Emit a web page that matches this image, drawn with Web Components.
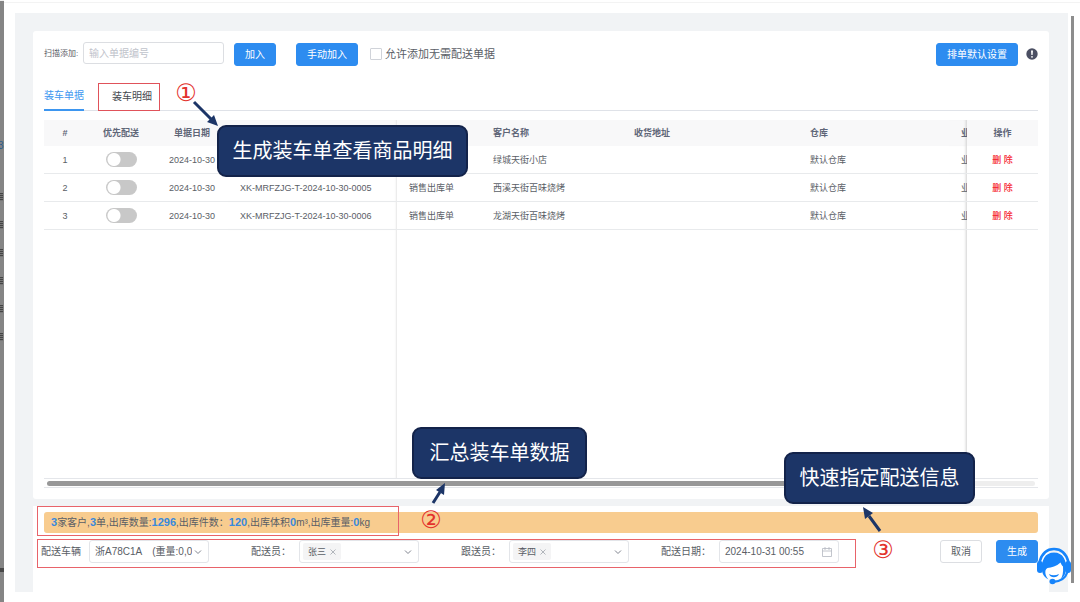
<!DOCTYPE html>
<html lang="zh-CN">
<head>
<meta charset="utf-8">
<title>装车单</title>
<style>
html,body{margin:0;height:100%}
body{font:10px/14px "Liberation Sans","Noto Sans CJK SC",sans-serif;color:#5a5e66;background:#fff;overflow:hidden}
</style>
</head>
<body>
<load-app></load-app>
<script>
const define=(name,html,init)=>customElements.define(name,class extends HTMLElement{
  connectedCallback(){
    if(this.shadowRoot)return;
    const root=this.attachShadow({mode:'open'});
    root.innerHTML='<style>*{box-sizing:border-box}button,input,select{font:inherit;color:inherit;margin:0}</style>'+(typeof html==='function'?html(this):html);
    if(init)init(root,this);
  }
});

define('ui-button',el=>`<style>
:host{display:block}
button{display:block;width:100%;height:23px;padding:0 10px;border:1px solid #2d8cf0;border-radius:3px;background:#2d8cf0;color:#fff;white-space:nowrap;line-height:20px}
:host([plain]) button{background:#fff;border-color:#dcdee2;color:#5a5e66}
</style><button type="button"><slot></slot></button>`);

/* page behind the drawer: only its edge is visible */
define('page-edge',`<style>
:host{display:flex;flex-direction:column;width:4px;background:#858585;overflow:hidden;border-top:1px solid #eee}
b{color:#2b5f8e;font-weight:400;line-height:14px;margin-top:138px;flex:none;margin-left:-2px}
i{flex:none;height:8px;width:3px;margin-top:20px;background:repeating-linear-gradient(#444 0 1px,#777 1px 2px)}
i:first-of-type{margin-top:40px}
u{flex:none;height:4px;background:#484848;margin-top:227px}
</style><b>3</b><i></i><i></i><i></i><i></i><i></i><i></i><u></u>`);

define('scan-toolbar',`<style>
:host{display:flex;align-items:center;height:24px}
label.s{font-size:8px;width:39px;white-space:nowrap}
input[type=text]{align-self:flex-start;width:141px;height:22px;border:1px solid #dcdee2;border-radius:3px;padding:0 5px;outline:0;background:#fff}
input::placeholder{color:#bfc3cb;opacity:1}
ui-button{align-self:flex-end;width:42px;margin-left:10px}
ui-button.m{width:62px;margin-left:20px}
ui-button.d{width:82px;margin-left:auto}
.c{display:flex;align-items:center;gap:3px;margin-left:12px;font-size:11px;white-space:nowrap}
.c input{appearance:none;width:12px;height:12px;border:1px solid #d0d3d9;border-radius:1px;background:#fff}
svg{width:12px;height:12px;margin-left:8px}
</style>
<label class="s" for="scan">扫描添加:</label><input type="text" id="scan" placeholder="输入单据编号">
<ui-button>加入</ui-button><ui-button class="m">手动加入</ui-button>
<label class="c"><input type="checkbox">允许添加无需配送单据</label>
<ui-button class="d">排单默认设置</ui-button>
<svg viewBox="0 0 12 12"><circle cx="6" cy="6" r="5.7" fill="#4b4f63"/><path d="M5 2.5h2l-.4 4.4H5.4z" fill="#fff"/><circle cx="6" cy="8.8" r=".9" fill="#fff"/></svg>`);

define('doc-tabs',`<style>
:host{display:flex;gap:28px;height:28px;border-bottom:1px solid #dfe2e8}
button{position:relative;border:0;background:none;padding:0 0 1px;height:28px;color:#44484f}
button.on{color:#3d96f0;border-bottom:2px solid #3d96f0;padding:0}
.mark{position:absolute;inset:0 -8px 0 -14px;border:1px solid #e0525a}
</style><button type="button" class="on">装车单据</button><button type="button">装车明细<span class="mark"></span></button>`);

const rows=[['','','绿城天街小店'],['XK-MRFZJG-T-2024-10-30-0005','销售出库单','西溪天街百味烧烤'],['XK-MRFZJG-T-2024-10-30-0006','销售出库单','龙湖天街百味烧烤']];
define('doc-table',`<style>
:host{display:flex;flex-direction:column;min-height:0}
.w{flex:1;min-height:0;border-bottom:1px solid #e4e6ea}
table{width:100%;height:100%;table-layout:fixed;border-collapse:separate;border-spacing:0;font-size:9px;line-height:12px}
th,td{padding:0 0 0 12px;text-align:left;white-space:nowrap;overflow:hidden;border-bottom:1px solid #e8eaec}
th{height:26px;background:#f8f8f9;border:0;font-weight:700;color:#5f6678}
td{height:28px}
tr.z td{height:auto;border:0}
.n{text-align:center;padding:0}
.e{box-shadow:inset -2px 0 2px -1px #e6e6e6}
.b{box-shadow:inset -3px 0 3px -2px #d0d0d0}
.n input{appearance:none;display:block;margin:0 auto;width:31px;height:15px;border-radius:8px;background:radial-gradient(circle at 8px 50%,#fff 6px,#c8c8c8 7px)}
a{color:#f5222d;text-decoration:none;font-weight:500}
.t{height:9px;padding:2px 3px;border-bottom:1px solid #e4e6ea}
.t div{height:5px;border-radius:3px;background:linear-gradient(90deg,#989898 86%,#eee 86%)}
</style>
<div class="w"><table><colgroup><col style="width:42px"><col style="width:70px"><col style="width:72px"><col style="width:169px"><col style="width:84px"><col style="width:141px"><col><col style="width:151px"><col style="width:18px"><col style="width:71px"></colgroup>
<thead><tr><th class="n">#</th><th class="n">优先配送</th><th class="n">单据日期</th><th class="e"></th><th></th><th>客户名称</th><th>收货地址</th><th>仓库</th><th class="b">业</th><th class="n">操作</th></tr></thead>
<tbody>${rows.map((r,i)=>`<tr><td class="n">${i+1}</td><td class="n"><input type="checkbox" role="switch" aria-label="优先配送"></td><td class="n">2024-10-30</td><td class="e">${r[0]}</td><td>${r[1]}</td><td>${r[2]}</td><td></td><td>默认仓库</td><td class="b">业</td><td class="n"><a href="#">删 除</a></td></tr>`).join('')}
<tr class="z"><td></td><td></td><td></td><td class="e"></td><td></td><td></td><td></td><td></td><td class="b"></td><td></td></tr></tbody></table></div>
<div class="t"><div></div></div>`);

define('summary-bar',`<style>
:host{display:flex;align-items:center;height:21px;padding:0 7px;border-radius:3px;background:#f8cc8f;white-space:nowrap}
b{font-size:11px;color:#3989dc}
</style><span><b>3</b>家客户,<b>3</b>单,出库数量:<b>1296</b>,出库件数：<b>120</b>,出库体积<b>0</b>m³,出库重量:<b>0</b>kg</span>`);

const chevron='<svg class="v" viewBox="0 0 8 8"><path d="M1 2.5l3 3 3-3" fill="none" stroke="#80848f"/></svg>';
define('form-field',el=>{
  const kind=el.getAttribute('kind'),v=el.getAttribute('value');
  const control={
    select:`<select id="f"><option>${v}</option></select>${chevron}`,
    tags:`<span class="tag">${v}<button type="button" aria-label="移除"><svg viewBox="0 0 6 6"><path d="M.5.5l5 5m0-5l-5 5" stroke="#a0a4ac" stroke-width=".8"/></svg></button></span><input id="f" type="text" role="combobox" aria-expanded="false">${chevron}`,
    date:`<input id="f" type="text" value="${v}"><svg class="cal" viewBox="0 0 10 10"><path d="M.5 1.5h9v8h-9zM.5 4h9M3 0v3M7 0v3" fill="none" stroke="#b4b8c0" stroke-width=".8"/></svg>`
  }[kind];
  return `<style>
:host{display:flex;align-items:center;gap:8px}
label{width:50px;text-align:right;white-space:nowrap}
:host([kind=select]) label{width:40px}
.box{display:flex;align-items:center;width:120px;height:23px;border:1px solid #e3e5e9;border-radius:3px;padding:0 6px 0 3px;background:#fff}
input,select{appearance:none;flex:1;min-width:0;border:0;background:none;outline:0;padding:0 0 0 2px;height:20px}
.v{width:8px;height:8px;flex:none;margin-left:2px}
.cal{width:10px;height:10px;flex:none}
.tag{display:flex;align-items:center;gap:4px;height:17px;padding:0 5px;background:#f4f4f5;font-size:9px;border-radius:2px}
.tag button{border:0;background:none;padding:0;width:6px;height:6px;display:flex}
.tag svg{width:6px;height:6px}
</style><label for="f">${el.getAttribute('label')}</label><div class="box">${control}</div>`;
});

define('delivery-footer',`<style>
:host{display:flex;flex-direction:column;gap:7px;padding:6px 11px 29px 8px;background:#fff;position:relative}
summary-bar{margin-left:3px}
.r{display:flex;gap:32px;align-items:center}
.a{display:flex;gap:14px;margin-left:auto}
.a ui-button{width:42px}
.m{position:absolute;border:1px solid #e8636a}
.m1{left:4px;top:0;width:362px;height:30px}
.m2{left:4px;top:33px;width:819px;height:29px}
</style>
<summary-bar></summary-bar>
<div class="r"><form-field kind="select" label="配送车辆" value="浙A78C1A&emsp;(重量:0,0)"></form-field><form-field kind="tags" label="配送员：" value="张三"></form-field><form-field kind="tags" label="跟送员：" value="李四"></form-field><form-field kind="date" label="配送日期：" value="2024-10-31 00:55"></form-field>
<div class="a"><ui-button plain>取消</ui-button><ui-button>生成</ui-button></div></div>
<span class="m m1"></span><span class="m m2"></span>`);

define('call-out',`<style>
:host{position:absolute;display:flex;align-items:center;justify-content:center;height:52px;border:2px solid #13234a;border-radius:9px;background:#1c3567;color:#fff;font-size:20px;line-height:28px;white-space:nowrap}
</style><slot></slot>`);

define('note-layer',`<style>
:host{position:absolute;inset:0;pointer-events:none}
svg{position:absolute;left:0;top:0;width:1080px;height:602px}
span{position:absolute;color:#e3322d;font:24px/24px "DejaVu Sans",sans-serif;width:22px;text-align:center}
</style>
<call-out style="left:217px;top:125px;width:251px">生成装车单查看商品明细</call-out>
<call-out style="left:412px;top:427px;width:175px">汇总装车单数据</call-out>
<call-out style="left:784px;top:452px;width:191px">快速指定配送信息</call-out>
<span style="left:175px;top:81px">①</span><span style="left:420px;top:508px">②</span><span style="left:872px;top:538px">③</span>
<svg viewBox="0 0 1080 602"><g stroke="#1c3567" stroke-width="3" fill="#1c3567"><path d="M194 102l17 17M433 503l7-11M880 531l-11-15"/><g stroke="none"><path d="M218 126l-11-4 7-7zM445 483l-1 12-8-5zM863 507l10 6-8 6z"/></g></g>
</svg>`);

define('chat-button',`<style>
:host{position:absolute;right:8px;bottom:17px;width:36px;height:38px}
button{display:block;width:36px;height:38px;border:0;padding:0;background:none}
</style><button type="button" aria-label="客服"><svg viewBox="0 0 36 38" width="36" height="38"><circle cx="18" cy="19" r="14" fill="#fff"/><path d="M3.500 15C6 6 11 2 18 2s12 4 14.500 13" fill="none" stroke="#1684fb" stroke-width="2.600"/><path d="M6.500 26C4.500 13 9 5.500 18 5.500S31.500 13 29.500 26c-1 3-3 5-5 6.500 2-3 3-7 2.500-13-1-1-2-2.500-2.500-4-4 4-9 5-13 5.500-2 1-2.500 3-2 6 .5 2 1.500 4 3 5.500C9.500 31 7.500 29 6.500 26z" fill="#1684fb"/><rect x="1" y="14" width="6" height="12" rx="3" fill="#1684fb"/><rect x="29" y="14" width="6" height="12" rx="3" fill="#1684fb"/><path d="M31.500 25c-2 6-7 9.500-14 9.800" fill="none" stroke="#1684fb" stroke-width="2.200"/><path d="M13 27c3 1.800 6.500 1.800 10 0-1.500 4.200-8.500 4.500-10 0z" fill="#1684fb"/><ellipse cx="16.500" cy="34.500" rx="3" ry="2.700" fill="#1684fb"/></svg></button>`);

define('load-app',`<style>
:host{display:flex;height:100vh;position:relative}
.drawer{flex:1;min-width:0;display:flex;padding:11px 6px 10px 11px;gap:3px;border-top:2px solid #fff;box-shadow:inset 0 1px #f3f3f3}
.main{flex:1;min-width:0;display:flex;flex-direction:column;gap:7px;padding:18px 19px 0 18px;background:#f1f3f5}
.card{flex:1;min-height:0;display:flex;flex-direction:column;padding:11px 11px 11px;background:#fff;border-radius:3px}
doc-tabs{margin-top:17px}
doc-table{flex:1;margin-top:9px}
.bar{width:3px;margin:3px 0 9px;background:#8d8d8d}
</style>
<page-edge></page-edge>
<div class="drawer"><main class="main"><section class="card"><scan-toolbar></scan-toolbar><doc-tabs></doc-tabs><doc-table></doc-table></section><delivery-footer></delivery-footer></main><div class="bar"></div></div>
<note-layer></note-layer><chat-button></chat-button>`);
</script>
</body>
</html>
